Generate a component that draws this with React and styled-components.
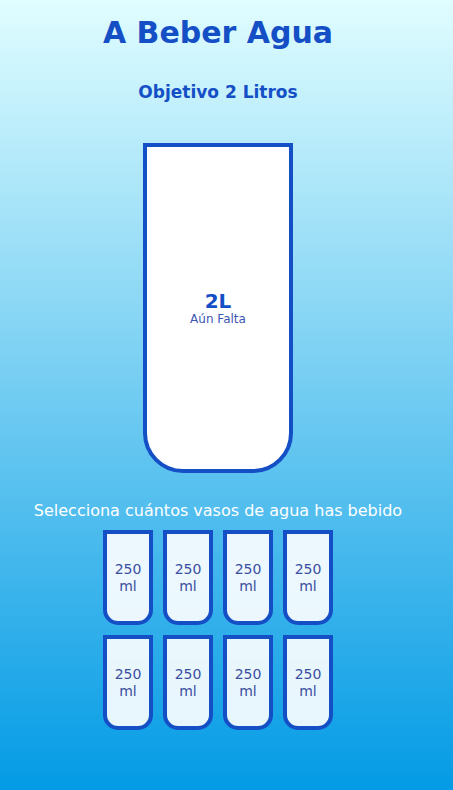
import React from "react";
import styled, { createGlobalStyle } from "styled-components";

const BLUE = "#144fc6";
const SMALL_CUPS = 8;

const GlobalStyle = createGlobalStyle`
  * { box-sizing: border-box; }
  body {
    margin: 0;
    font-family: "DejaVu Sans", "Noto Sans", sans-serif;
    background: linear-gradient(to bottom, #e0fdff 0%, #039be5 100%);
    min-height: 100vh;
  }
`;

// the reference leaves room for a scrollbar, so content centres at ~218px
const Page = styled.div`
  display: flex;
  flex-direction: column;
  align-items: center;
  min-height: 790px;
  padding-right: 17px;
  color: #fff;
`;

const Title = styled.h1`
  margin: 15px 0 0;
  font-size: 30px;
  font-weight: 700;
  color: ${BLUE};
`;

const Goal = styled.h3`
  margin: 32px 0 0;
  font-size: 17px;
  font-weight: 700;
  color: ${BLUE};
`;

const Cup = styled.div`
  display: flex;
  flex-direction: column;
  align-items: center;
  justify-content: center;
  width: ${(p) => (p.$small ? 50 : 150)}px;
  height: ${(p) => (p.$small ? 95 : 330)}px;
  margin: ${(p) => (p.$small ? "5px" : "41px 0 28px")};
  border: 4px solid ${BLUE};
  border-radius: ${(p) => (p.$small ? "0 0 15px 15px" : "0 0 40px 40px")};
  background: ${(p) => (p.$small ? "rgba(255,255,255,0.9)" : "#fff")};
  color: ${(p) => (p.$small ? "#3b4fa0" : BLUE)};
  text-align: center;
  font-size: 14px;
  line-height: 1.15;
`;

const Amount = styled.span`
  font-size: 20px;
  font-weight: 700;
`;

const Remaining = styled.small`
  font-size: 12px;
  color: #3b56b4;
`;

const Prompt = styled.p`
  margin: 0;
  font-size: 16px;
  text-align: center;
`;

const Cups = styled.div`
  display: flex;
  flex-wrap: wrap;
  justify-content: center;
  width: 240px;
  margin-top: 5px;
`;

export default function App() {
  return (
    <>
      <GlobalStyle />
      <Page>
        <Title>A Beber Agua</Title>
        <Goal>Objetivo 2 Litros</Goal>
        <Cup>
          <Amount>2L</Amount>
          <Remaining>Aún Falta</Remaining>
        </Cup>
        <Prompt>Selecciona cuántos vasos de agua has bebido</Prompt>
        <Cups>
          {Array.from({ length: SMALL_CUPS }, (_, i) => (
            <Cup $small key={i}>
              250
              <br />
              ml
            </Cup>
          ))}
        </Cups>
      </Page>
    </>
  );
}
